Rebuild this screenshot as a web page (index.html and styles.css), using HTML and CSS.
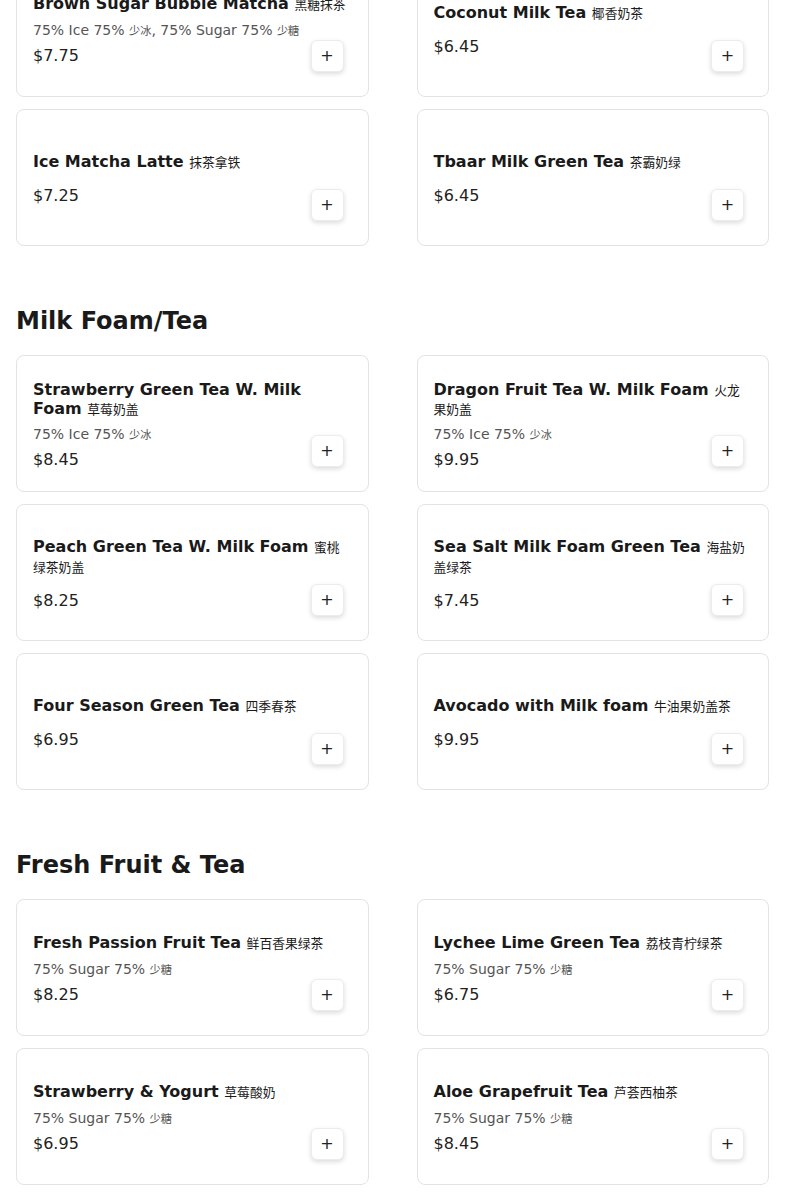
FILE: index.html
```html
<!DOCTYPE html>
<html lang="en">
<head>
<meta charset="utf-8">
<title>Menu</title>
<link rel="stylesheet" href="styles.css">
</head>
<body>
<main class="menu">
  <section class="section">
    <div class="grid">
      <div class="card">
        <div class="info">
          <div class="name">Brown Sugar Bubble Matcha <span class="zh">黑糖抹茶</span></div>
          <div class="opts">75% Ice 75% <span class="zh">少冰</span>, 75% Sugar 75% <span class="zh">少糖</span></div>
          <div class="price">$7.75</div>
        </div>
        <button class="add" type="button">+</button>
      </div>
      <div class="card">
        <div class="info">
          <div class="name">Coconut Milk Tea <span class="zh">椰香奶茶</span></div>
          <div class="price">$6.45</div>
        </div>
        <button class="add" type="button">+</button>
      </div>
      <div class="card">
        <div class="info">
          <div class="name">Ice Matcha Latte <span class="zh">抹茶拿铁</span></div>
          <div class="price">$7.25</div>
        </div>
        <button class="add" type="button">+</button>
      </div>
      <div class="card">
        <div class="info">
          <div class="name">Tbaar Milk Green Tea <span class="zh">茶霸奶绿</span></div>
          <div class="price">$6.45</div>
        </div>
        <button class="add" type="button">+</button>
      </div>
    </div>
  </section>

  <section class="section">
    <h2 class="section-title">Milk Foam/Tea</h2>
    <div class="grid">
      <div class="card">
        <div class="info">
          <div class="name">Strawberry Green Tea W. Milk Foam <span class="zh">草莓奶盖</span></div>
          <div class="opts">75% Ice 75% <span class="zh">少冰</span></div>
          <div class="price">$8.45</div>
        </div>
        <button class="add" type="button">+</button>
      </div>
      <div class="card">
        <div class="info">
          <div class="name">Dragon Fruit Tea W. Milk Foam <span class="zh">火龙果奶盖</span></div>
          <div class="opts">75% Ice 75% <span class="zh">少冰</span></div>
          <div class="price">$9.95</div>
        </div>
        <button class="add" type="button">+</button>
      </div>
      <div class="card">
        <div class="info">
          <div class="name">Peach Green Tea W. Milk Foam <span class="zh">蜜桃绿茶奶盖</span></div>
          <div class="price">$8.25</div>
        </div>
        <button class="add" type="button">+</button>
      </div>
      <div class="card">
        <div class="info">
          <div class="name">Sea Salt Milk Foam Green Tea <span class="zh">海盐奶盖绿茶</span></div>
          <div class="price">$7.45</div>
        </div>
        <button class="add" type="button">+</button>
      </div>
      <div class="card">
        <div class="info">
          <div class="name">Four Season Green Tea <span class="zh">四季春茶</span></div>
          <div class="price">$6.95</div>
        </div>
        <button class="add" type="button">+</button>
      </div>
      <div class="card">
        <div class="info">
          <div class="name">Avocado with Milk foam <span class="zh">牛油果奶盖茶</span></div>
          <div class="price">$9.95</div>
        </div>
        <button class="add" type="button">+</button>
      </div>
    </div>
  </section>

  <section class="section">
    <h2 class="section-title">Fresh Fruit &amp; Tea</h2>
    <div class="grid">
      <div class="card">
        <div class="info">
          <div class="name">Fresh Passion Fruit Tea <span class="zh">鲜百香果绿茶</span></div>
          <div class="opts">75% Sugar 75% <span class="zh">少糖</span></div>
          <div class="price">$8.25</div>
        </div>
        <button class="add" type="button">+</button>
      </div>
      <div class="card">
        <div class="info">
          <div class="name">Lychee Lime Green Tea <span class="zh">荔枝青柠绿茶</span></div>
          <div class="opts">75% Sugar 75% <span class="zh">少糖</span></div>
          <div class="price">$6.75</div>
        </div>
        <button class="add" type="button">+</button>
      </div>
      <div class="card">
        <div class="info">
          <div class="name">Strawberry &amp; Yogurt <span class="zh">草莓酸奶</span></div>
          <div class="opts">75% Sugar 75% <span class="zh">少糖</span></div>
          <div class="price">$6.95</div>
        </div>
        <button class="add" type="button">+</button>
      </div>
      <div class="card">
        <div class="info">
          <div class="name">Aloe Grapefruit Tea <span class="zh">芦荟西柚茶</span></div>
          <div class="opts">75% Sugar 75% <span class="zh">少糖</span></div>
          <div class="price">$8.45</div>
        </div>
        <button class="add" type="button">+</button>
      </div>
    </div>
  </section>
</main>
</body>
</html>
```

FILE: styles.css
```css
html, body {
  margin: 0;
  padding: 0;
  background: #ffffff;
}

body {
  font-family: "DejaVu Sans", "Noto Sans CJK SC", sans-serif;
  color: #1a1a1a;
}

.menu {
  padding: 0 16px;
  margin-top: -40px;
}

.section + .section {
  margin-top: 61px;
}

.section-title {
  font-size: 24px;
  font-weight: 700;
  line-height: normal;
  margin: 0 0 20px;
  color: #1a1a1a;
}

.grid {
  display: grid;
  grid-template-columns: 1fr 1fr;
  column-gap: 48px;
  row-gap: 12px;
}

.card {
  position: relative;
  box-sizing: border-box;
  min-height: 137px;
  border: 1px solid #e3e3e3;
  border-radius: 8px;
  background: #fff;
  padding: 17px 16px 15px;
  display: flex;
  align-items: center;
}

.info {
  flex: 1;
  min-width: 0;
}

.name {
  font-size: 16px;
  font-weight: 700;
  line-height: 1.2;
  color: #1a1a1a;
  margin-bottom: 8px;
}

.zh {
  font-family: "Noto Sans CJK SC", "DejaVu Sans", sans-serif;
  font-weight: 400;
  font-size: 0.8em;
  line-height: 1;
}

.opts {
  font-size: 14px;
  line-height: normal;
  color: #555;
}

.price {
  font-size: 16px;
  line-height: normal;
  color: #222;
  margin-top: 8px;
}

.name + .price {
  margin-top: 15px;
}

.add {
  position: absolute;
  right: 24px;
  bottom: 24px;
  box-sizing: border-box;
  width: 33px;
  height: 32px;
  padding: 0;
  border: 1px solid #ececec;
  border-radius: 6px;
  background: #fff;
  box-shadow: 0 2px 5px rgba(0, 0, 0, 0.14);
  font-family: "DejaVu Sans", sans-serif;
  font-size: 16px;
  color: #222;
  line-height: 1;
  display: flex;
  align-items: center;
  justify-content: center;
}
```
